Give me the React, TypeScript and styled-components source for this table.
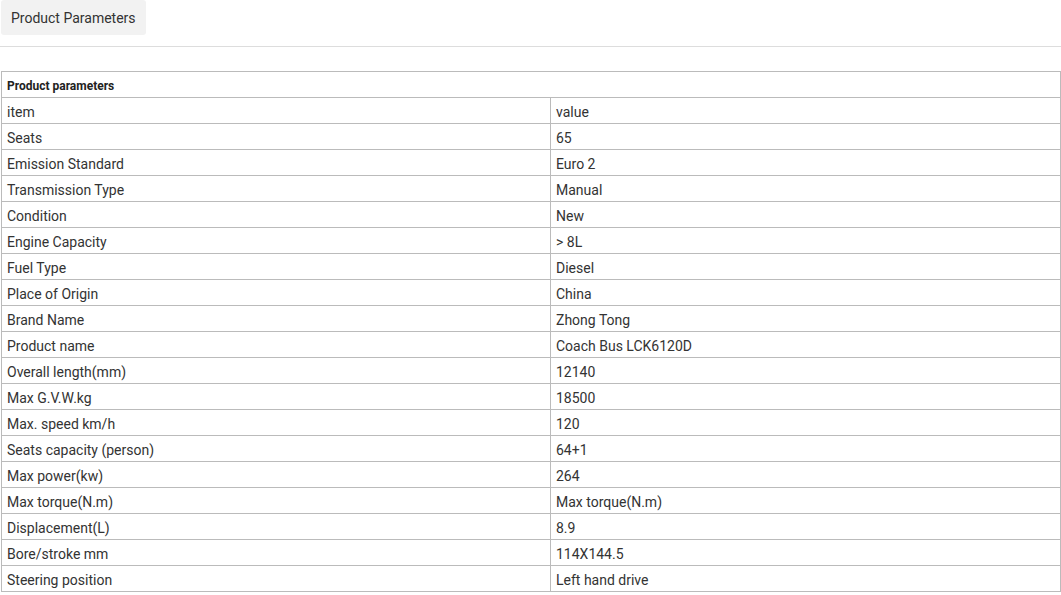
import React from 'react'
import styled, { createGlobalStyle } from 'styled-components'

const GlobalStyle = createGlobalStyle`
    body {
        margin: 0;
        background: #fff;
        font-family: Roboto, "Liberation Sans", sans-serif;
        color: #333;
    }
`

const Page = styled.div`
    width: 1061px;
`

const TabBar = styled.div`
    display: flex;
    padding-left: 1px;
    border-bottom: 1px solid #ddd;
    padding-bottom: 11px;
`

const Tab = styled.div`
    height: 34px;
    line-height: 35px;
    padding: 1px 10px 0;
    background-color: #f2f2f2;
    border-radius: 3px;
    font-size: 14px;
    color: #333;
`

const Table = styled.table`
    margin: 24px 0 0 1px;
    width: 1060px;
    border-collapse: collapse;
    font-size: 14px;
    color: #333;

    td {
        border: 1px solid #bbb;
        height: 21px;
        padding: 4px 5px 0;
        line-height: 21px;
        vertical-align: middle;
    }

    td.item {
        width: 538px;
    }
`

const HeadCell = styled.td`
    font-size: 12px;
    font-weight: bold;
    color: #222;
`

const rows: [string, string][] = [
    ['item', 'value'],
    ['Seats', '65'],
    ['Emission Standard', 'Euro 2'],
    ['Transmission Type', 'Manual'],
    ['Condition', 'New'],
    ['Engine Capacity', '> 8L'],
    ['Fuel Type', 'Diesel'],
    ['Place of Origin', 'China'],
    ['Brand Name', 'Zhong Tong'],
    ['Product name', 'Coach Bus LCK6120D'],
    ['Overall length(mm)', '12140'],
    ['Max G.V.W.kg', '18500'],
    ['Max. speed km/h', '120'],
    ['Seats capacity (person)', '64+1'],
    ['Max power(kw)', '264'],
    ['Max torque(N.m)', 'Max torque(N.m)'],
    ['Displacement(L)', '8.9'],
    ['Bore/stroke mm', '114X144.5'],
    ['Steering position', 'Left hand drive'],
]

const App = () => {
    return (
        <Page>
            <GlobalStyle />
            <TabBar>
                <Tab>Product Parameters</Tab>
            </TabBar>
            <Table>
                <tbody>
                    <tr>
                        <HeadCell colSpan={2}>Product parameters</HeadCell>
                    </tr>
                    {rows.map(([k, v]) => (
                        <tr key={k}>
                            <td className='item'>{k}</td>
                            <td>{v}</td>
                        </tr>
                    ))}
                </tbody>
            </Table>
        </Page>
    )
}

export default App
